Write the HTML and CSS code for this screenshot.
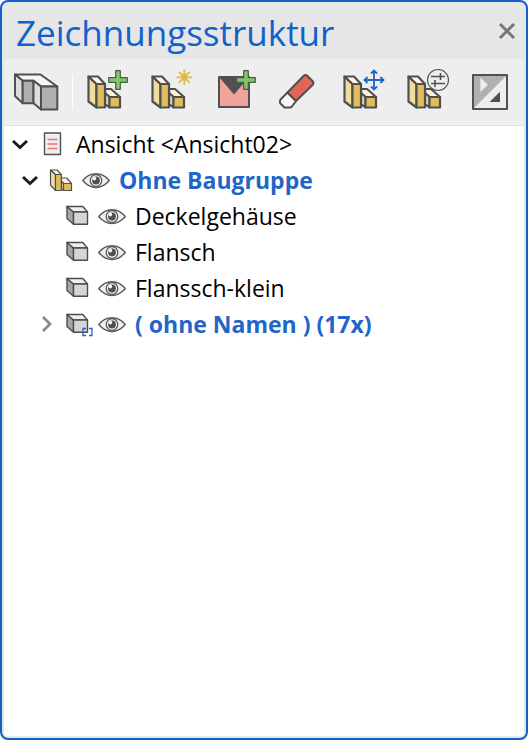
FILE: index.html
```html
<!DOCTYPE html>
<html lang="de">
<head>
<meta charset="utf-8">
<meta name="viewport" content="width=device-width, initial-scale=1">
<title>Zeichnungsstruktur</title>
<link rel="stylesheet" href="styles.css">
</head>
<body>
<svg class="defs" aria-hidden="true">
  <symbol id="assembly" viewBox="0 0 48 48">
    <g stroke="#505050" stroke-width="2.200" stroke-linejoin="round">
      <path fill="#f0dca0" d="M4.500 8.500L12.500 16V39.500L4.500 33.500Z"/>
      <path fill="#fdf5e0" d="M4.500 8.500H14L21 16H12.500Z"/>
      <path fill="#fdf5e0" d="M21 21H27L36 29H25.500L21 25Z"/>
      <path fill="#f0dca0" d="M21 25L25.500 29V39.500L21 36Z"/>
      <path fill="#e0be5c" d="M25.500 29H36V39.500H25.500Z"/>
      <path fill="#e0be5c" d="M12.500 16H21V39.500H12.500Z"/>
    </g>
  </symbol>
  <symbol id="plus" viewBox="0 0 48 48">
    <path fill="#7fc96b" stroke="#4c5a48" stroke-width="1.200" stroke-linejoin="round" d="M31.700 2.700H36.300V9.700H43.300V14.300H36.300V21.300H31.700V14.300H24.700V9.700H31.700Z"/>
  </symbol>
  <symbol id="cube" viewBox="0 0 24 24">
    <g stroke="#4c4c4c" stroke-width="1.400" stroke-linejoin="round">
      <path fill="#a8a8a8" d="M2 1.500L8.500 7V19.200L2 13.500Z"/>
      <path fill="#efefef" d="M2 1.500H17.800L22.500 7H8.500Z"/>
      <path fill="#d6d6d6" d="M8.500 7H22.500V19.200H8.500Z"/>
    </g>
  </symbol>
  <symbol id="eye" viewBox="0 0 28 16">
    <path fill="#f1f1f1" stroke="#5a5a5a" stroke-width="1.400" stroke-linejoin="round" d="M.7 7.500C4.500 3 9 .8 14 .8S23.500 3 27.300 7.500C23.500 12 19 14.500 14 14.500S4.500 12 .7 7.500Z"/>
    <circle cx="14" cy="7.500" r="5.800" fill="#f1f1f1" stroke="#5a5a5a" stroke-width="1.300"/>
    <circle cx="14" cy="7.500" r="3.900" fill="#505050"/>
    <circle cx="12.300" cy="5.500" r="1.900" fill="#f1f1f1"/>
  </symbol>
  <symbol id="open" viewBox="0 0 20 20">
    <path fill="none" stroke="#1c1c1c" stroke-width="3" d="M3 6L10 12.500L17 6"/>
  </symbol>
</svg>

<main class="panel">
  <header class="titlebar">
    <h1 class="title">Zeichnungsstruktur</h1>
    <button class="close" type="button" aria-label="Schließen">
      <svg viewBox="0 0 16 16" width="16" height="16"><path fill="none" stroke="#767676" stroke-width="3" d="M1 1L15 15M15 1L1 15"/></svg>
    </button>
  </header>

  <div class="toolbar" role="toolbar" aria-label="Werkzeuge">
    <button class="tool" type="button" aria-label="Teil">
      <svg viewBox="0 0 48 48"><g stroke="#505050" stroke-width="2" stroke-linejoin="round">
        <path fill="#f6f6f6" d="M3 6.500H28.500L45.300 18.500H29L21.500 12.700H10.700Z"/>
        <path fill="#dedede" d="M3 6.500L10.700 12.700V35.300L3 28Z"/>
        <path fill="#b0b0b0" d="M10.700 12.700H21.500V35.300H10.700Z"/>
        <path fill="#dedede" d="M21.500 12.700L29 18.500V41.500L21.500 35.300Z"/>
        <path fill="#b0b0b0" d="M29 18.500H45.300V41.500H29Z"/></g></svg>
    </button>
    <span class="separator"></span>
    <div class="tools">
      <button class="tool" type="button" aria-label="Baugruppe hinzufügen">
        <svg viewBox="0 0 48 48"><use href="#assembly"/><use href="#plus"/></svg>
      </button>
      <button class="tool" type="button" aria-label="Neue Baugruppe">
        <svg viewBox="0 0 48 48"><use href="#assembly"/><path fill="none" stroke="#e0b850" stroke-width="1.800" d="M36.300 1.500V17.100M28.500 9.300H44.100M30.800 3.800L41.800 14.800M41.800 3.800L30.800 14.800"/><circle cx="36.300" cy="9.300" r="3.200" fill="#e0b850"/></svg>
      </button>
      <button class="tool" type="button" aria-label="Ansicht hinzufügen">
        <svg viewBox="0 0 48 48"><path fill="#eea49b" d="M7 9H37V39H7Z"/><path fill="#505050" d="M7 9H37L22 26.500Z"/><path fill="none" stroke="#505050" stroke-width="2" stroke-linejoin="round" d="M7 9H37V39H7Z"/><use href="#plus"/></svg>
      </button>
      <button class="tool" type="button" aria-label="Löschen">
        <svg viewBox="0 0 48 48"><g stroke="#505050" stroke-width="2" stroke-linejoin="round"><path fill="#f8f8f8" d="M11.500 24.500L5 31Q4 32 4 33V35L8.500 39.500H14Q15 39.500 16 38.500L20 33Z"/><path fill="#e06656" d="M11.500 24.500L27.500 8Q29.500 6 31.500 8L36.500 13Q38.300 15 36.500 17L20 33Z"/></g></svg>
      </button>
      <button class="tool" type="button" aria-label="Verschieben">
        <svg viewBox="0 0 48 48"><use href="#assembly"/><path fill="none" stroke="#2265c8" stroke-width="1.800" d="M34 3V21M25 12H43M31 5.500L34 2.500L37 5.500M31 18.500L34 21.500L37 18.500M27.500 9L24.500 12L27.500 15M40.500 9L43.500 12L40.500 15"/></svg>
      </button>
      <button class="tool" type="button" aria-label="Einstellungen">
        <svg viewBox="0 0 48 48"><use href="#assembly"/><circle cx="34" cy="12" r="10.500" fill="#eee" stroke="#505050" stroke-width="1.100"/><path fill="none" stroke="#505050" stroke-width="1.600" d="M27 8.500H41M36.500 5V12M27 15.500H41M31 12V19"/></svg>
      </button>
      <button class="tool" type="button" aria-label="Invertieren">
        <svg viewBox="0 0 48 48"><path fill="#ededed" d="M5 7H39V41H5Z"/><path fill="#b0b0b0" d="M5 7H39L5 41Z"/><path fill="none" stroke="#505050" stroke-width="2" stroke-linejoin="round" d="M5 7H39V41H5Z"/><path fill="#ededed" d="M12.300 9.500V24L20 16.700Z"/><path fill="#505050" d="M32 23.700V34H21.700Z"/></svg>
      </button>
    </div>
  </div>

  <ul class="tree">
    <li class="row root">
      <button class="twisty" type="button" aria-label="Zuklappen"><svg viewBox="0 0 20 20"><use href="#open"/></svg></button>
      <svg class="page-icon" viewBox="0 0 28 24"><path fill="#efefef" stroke="#505050" stroke-width="1.400" stroke-linejoin="round" d="M5.500 0H21.500V21.500H5.500Z"/><path stroke="#ef7468" stroke-width="1.300" d="M8.500 6.500H18.500M8.500 11H18.500M8.500 15.500H18.500"/></svg>
      <span class="label">Ansicht &lt;Ansicht02&gt;</span>
    </li>
    <li class="row group">
      <button class="twisty" type="button" aria-label="Zuklappen"><svg viewBox="0 0 20 20"><use href="#open"/></svg></button>
      <svg class="icon" viewBox="0 0 24 24"><g stroke="#505050" stroke-width="1.200" stroke-linejoin="round">
        <path fill="#f0dca0" d="M1.500 1L6.500 5.500V21.500L1.500 16Z"/><path fill="#fdf5e0" d="M1.500 1H8L12.300 5.500H6.500Z"/>
        <path fill="#fdf5e0" d="M12.300 9H17.700L22.500 14.500H14.500L12.300 12Z"/><path fill="#f0dca0" d="M12.300 12L14.500 14.500V21.500L12.300 20Z"/>
        <path fill="#e0be5c" d="M14.500 14.500H22.500V21.500H14.500ZM6.500 5.500H12.300V21.500H6.500Z"/></g></svg>
      <button class="eye" type="button" aria-label="Sichtbarkeit"><svg viewBox="0 0 28 16"><use href="#eye"/></svg></button>
      <span class="label strong">Ohne Baugruppe</span>
    </li>
    <li class="row item">
      <span class="twisty"></span>
      <svg class="icon" viewBox="0 0 24 24"><use href="#cube"/></svg>
      <button class="eye" type="button" aria-label="Sichtbarkeit"><svg viewBox="0 0 28 16"><use href="#eye"/></svg></button>
      <span class="label">Deckelgehäuse</span>
    </li>
    <li class="row item">
      <span class="twisty"></span>
      <svg class="icon" viewBox="0 0 24 24"><use href="#cube"/></svg>
      <button class="eye" type="button" aria-label="Sichtbarkeit"><svg viewBox="0 0 28 16"><use href="#eye"/></svg></button>
      <span class="label">Flansch</span>
    </li>
    <li class="row item">
      <span class="twisty"></span>
      <svg class="icon" viewBox="0 0 24 24"><use href="#cube"/></svg>
      <button class="eye" type="button" aria-label="Sichtbarkeit"><svg viewBox="0 0 28 16"><use href="#eye"/></svg></button>
      <span class="label">Flanssch-klein</span>
    </li>
    <li class="row item">
      <button class="twisty" type="button" aria-label="Aufklappen"><svg viewBox="0 0 20 20"><path fill="none" stroke="#8a8a8a" stroke-width="2.800" d="M7 2L14 9L7 16"/></svg></button>
      <svg class="icon" viewBox="0 0 24 24"><use href="#cube"/><path fill="none" stroke="#2265c8" stroke-width="1.300" d="M21 15.500H18V22.500H21M24 15.500H27V22.500H24"/></svg>
      <button class="eye" type="button" aria-label="Sichtbarkeit"><svg viewBox="0 0 28 16"><use href="#eye"/></svg></button>
      <span class="label strong">( ohne Namen ) (17x)</span>
    </li>
  </ul>
</main>
</body>
</html>
```
FILE: styles.css
```css
* {
  box-sizing: border-box;
}

body {
  margin: 0;
  background: #fff;
  font-family: "Open Sans", "Noto Sans", sans-serif;
  color: #000;
}

button {
  padding: 0;
  border: 0;
  background: none;
}

svg {
  display: block;
  overflow: visible;
}

.defs {
  position: absolute;
  width: 0;
  height: 0;
}

.panel {
  display: flex;
  flex-direction: column;
  min-height: 100vh;
  padding: 0 2px 2px;
  border: 2px solid #0f62c9;
  border-radius: 8px;
  background: #e6e6e6;
}

.titlebar {
  display: flex;
  align-items: center;
  justify-content: space-between;
  height: 57px;
  padding: 0 9px 0 12px;
}

.title {
  margin: 0;
  padding-top: 4px;
  font-size: 35px;
  line-height: 48px;
  font-weight: 400;
  color: #0f62c9;
}

.close {
  width: 16px;
  height: 16px;
}

.toolbar {
  display: flex;
  align-items: center;
  height: 67px;
  padding: 0 8px;
  border-bottom: 1px solid #e2e2e2;
  border-radius: 0 0 4px 4px;
  background: #eee;
}

.tool {
  flex: none;
  width: 48px;
  height: 48px;
}

.separator {
  width: 1px;
  height: 36px;
  margin: 0 11px 0 12px;
  background: #fff;
}

.tools {
  display: flex;
  gap: 16px;
}

.tree {
  flex: 1;
  margin: 0;
  padding: 1px 0 0;
  border-radius: 0 0 4px 4px;
  background: #fff;
  list-style: none;
}

.row {
  display: flex;
  align-items: center;
  gap: 9px;
  height: 36px;
}

.root {
  padding-left: 6px;
}

.group {
  padding-left: 16px;
}

.item {
  padding-left: 32px;
}

.twisty {
  flex: none;
  width: 20px;
  height: 20px;
}

.icon {
  flex: none;
  width: 24px;
  height: 24px;
}

.page-icon {
  flex: none;
  width: 28px;
  height: 24px;
}

.eye {
  flex: none;
  width: 28px;
  height: 16px;
}

.label {
  padding-bottom: 2px;
  font-size: 23px;
  line-height: 32px;
  white-space: nowrap;
}

.strong {
  font-weight: 700;
  color: #2265c8;
}
```
